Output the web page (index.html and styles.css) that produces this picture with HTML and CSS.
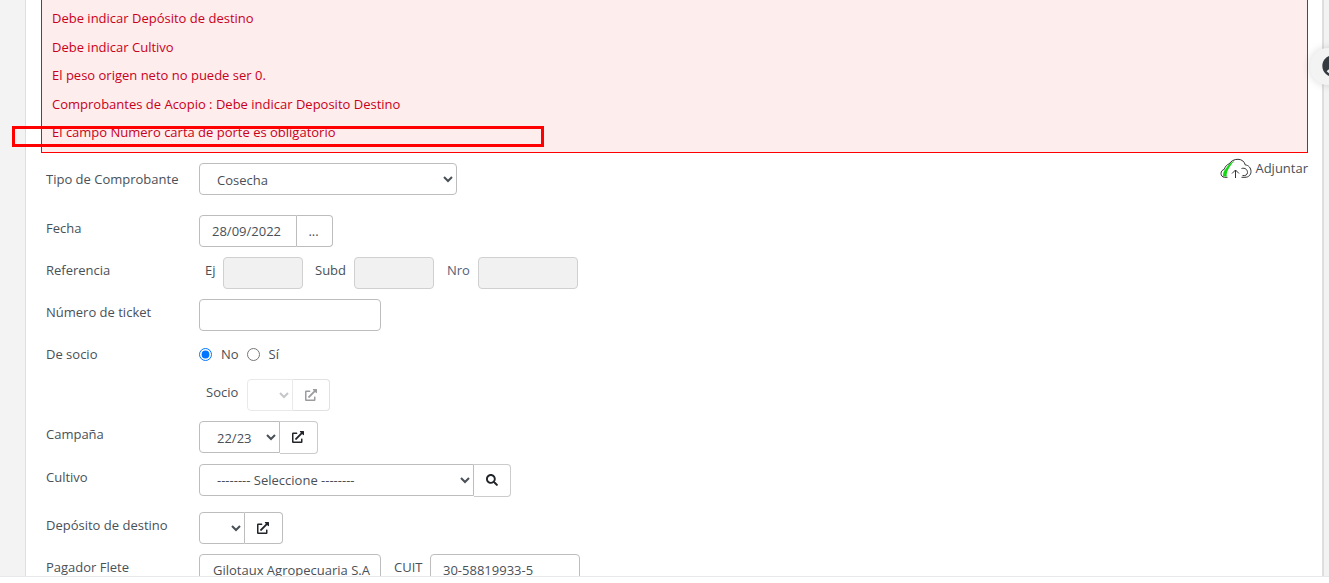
FILE: index.html
```html
<!DOCTYPE html>
<html lang="es">
<head>
<meta charset="utf-8">
<title>Comprobante</title>
<link rel="stylesheet" href="styles.css">
</head>
<body>
<main class="card">
  <div class="alert">
    <p>Debe indicar Depósito de destino</p>
    <p>Debe indicar Cultivo</p>
    <p>El peso origen neto no puede ser 0.</p>
    <p>Comprobantes de Acopio : Debe indicar Deposito Destino</p>
    <p>El campo Numero carta de porte es obligatorio</p>
  </div>
  <form class="form">
    <a class="attach">
      <svg width="32" height="20" viewBox="0 0 32 20" fill="none"><path d="M14.500 2.500C10.500 4.500 7.500 7.500 6 10.500C3.800 12.500 2.500 15.500 3.200 18.500L6.800 18.500C6.200 14.500 8.500 9.500 14.500 2.500Z" fill="#12d812"/><path d="M7.500 19.300H4.500C2.300 19.300 1 17.300 1 15.500C1 13.300 2.600 11.800 4.300 11.300C5.200 8.300 7 6.500 9.300 5.800C11 3 14 1.300 18 1.300C22 1.300 24.500 3.800 25.300 7C28.500 7 31 10 31 13.500C31 17 28.500 19.300 25 19.300H21.500" stroke="#333"/><path d="M15.500 20V12M12 15.500L15.500 12L19 15.500" stroke="#333"/><path d="M21.500 10.500C25 9.500 27.500 11.500 27.500 14.500C27.500 17 25 18 22.500 17.500" stroke="#333"/></svg>
      Adjuntar
    </a>
    <div class="row row-tipo">
      <label class="label">Tipo de Comprobante</label>
      <select class="ctl w258"><option>Cosecha</option></select>
    </div>
    <div class="row">
      <label class="label">Fecha</label>
      <div class="group">
        <input class="ctl pad12 w99 joined-l" value="28/09/2022">
        <button type="button" class="ctl addon dots">...</button>
      </div>
    </div>
    <div class="row">
      <label class="label">Referencia</label>
      <span class="sub s-ej">Ej</span><input class="ctl off w80" disabled>
      <span class="sub s-subd">Subd</span><input class="ctl off w80" disabled>
      <span class="sub s-nro">Nro</span><input class="ctl off w100" disabled>
    </div>
    <div class="row">
      <label class="label">Número de ticket</label>
      <input class="ctl w182">
    </div>
    <div class="row row-radio">
      <label class="label">De socio</label>
      <input class="radio" type="radio" name="socio" checked><span class="opt">No</span>
      <input class="radio" type="radio" name="socio"><span class="opt">Sí</span>
    </div>
    <div class="row row-socio">
      <span class="sub s-socio">Socio</span>
      <div class="group faded">
        <select class="ctl w46 joined-l" disabled></select>
        <button type="button" class="ctl addon w37" disabled><svg class="ext" viewBox="0 0 512 512"><use href="#ext"/></svg></button>
      </div>
    </div>
    <div class="row">
      <label class="label">Campaña</label>
      <div class="group">
        <select class="ctl w81 joined-l"><option>22/23</option></select>
        <button type="button" class="ctl addon tall w38"><svg class="ext" viewBox="0 0 512 512"><use href="#ext"/></svg></button>
      </div>
    </div>
    <div class="row row-cultivo">
      <label class="label">Cultivo</label>
      <div class="group">
        <select class="ctl w275 joined-l"><option>-------- Seleccione --------</option></select>
        <button type="button" class="ctl addon tall w37"><svg class="ext" viewBox="0 0 512 512"><path d="M505 442.700 405.300 343c-4.500-4.500-10.600-7-17-7H372c27.600-35.300 44-79.700 44-128C416 93.100 322.900 0 208 0S0 93.100 0 208s93.100 208 208 208c48.300 0 92.700-16.400 128-44v16.300c0 6.400 2.500 12.500 7 17l99.700 99.700c9.400 9.400 24.600 9.400 33.900 0l28.300-28.300c9.400-9.400 9.400-24.600.1-34zM208 336c-70.700 0-128-57.200-128-128 0-70.700 57.200-128 128-128 70.700 0 128 57.200 128 128 0 70.700-57.200 128-128 128z" fill="#212529"/></svg></button>
      </div>
    </div>
    <div class="row row-deposito">
      <label class="label">Depósito de destino</label>
      <div class="group">
        <select class="ctl w46 joined-l"></select>
        <button type="button" class="ctl addon w38"><svg class="ext" viewBox="0 0 512 512"><use href="#ext"/></svg></button>
      </div>
    </div>
    <div class="row">
      <label class="label">Pagador Flete</label>
      <input class="ctl tight w182" value="Gilotaux Agropecuaria S.A">
      <span class="sub s-cuit">CUIT</span>
      <input class="ctl pad12 w150" value="30-58819933-5">
    </div>
  </form>
</main>
<footer class="strip"></footer>
<div class="user-tab"><svg width="22" height="22" viewBox="0 0 496 512"><path fill="#343a40" d="M248 8C111 8 0 119 0 256s111 248 248 248 248-111 248-248S385 8 248 8zm0 96c48.600 0 88 39.400 88 88s-39.400 88-88 88-88-39.400-88-88 39.400-88 88-88zm0 344c-58.700 0-111.300-26.600-146.500-68.200 18.800-35.400 55.600-59.800 98.500-59.800 2.400 0 4.800.4 7.100 1.100 13 4.200 26.600 6.900 40.900 6.900 14.300 0 28-2.700 40.900-6.900 2.300-.7 4.700-1.100 7.100-1.100 42.900 0 79.700 24.400 98.500 59.800C359.300 421.400 306.700 448 248 448z"/></svg></div>
<div class="mark"></div>
<svg class="defs" width="0" height="0"><defs><g id="ext"><path d="M432 320h-32a16 16 0 0 0-16 16v112H64V128h144a16 16 0 0 0 16-16V80a16 16 0 0 0-16-16H48a48 48 0 0 0-48 48v352a48 48 0 0 0 48 48h352a48 48 0 0 0 48-48V336a16 16 0 0 0-16-16zM488 0H360c-21.400 0-32.100 25.900-17 41l35.700 35.700L135 320.400a24 24 0 0 0 0 34l22.700 22.600a24 24 0 0 0 34 0l243.600-243.700L471 169c15 15 41 4.500 41-17V24a24 24 0 0 0-24-24z"/></g></defs></svg>
</body>
</html>
```
FILE: styles.css
```css
* { box-sizing: border-box; }
html, body { height: 583px; overflow: hidden; }
body { margin: 0; background: #f3f3f3; font-family: "Open Sans", sans-serif; font-size: 13px; color: #495057; position: relative; }
.card { margin-left: 25px; margin-right: 5px; height: 576px; overflow: hidden; background: #fff; border-left: 1px solid #dedede; border-right: 2px solid #dedede; padding: 0 14px 0 15px; }
.strip { height: 7px; background: #fff; border-top: 1px solid #e6e8ea; }
.alert { height: 153px; border: 1px solid #f00; border-top: 0; background: #feeded; color: #c9001a; padding: 4px 10px 0; }
.alert p { margin: 0; height: 28.500px; line-height: 28.500px; white-space: nowrap; }
.form { position: relative; padding-top: 10px; }
.attach { position: absolute; top: 5px; right: 0; display: flex; align-items: center; gap: 3px; color: #495057; }
.row { display: flex; align-items: flex-start; height: 32px; margin: 0 0 10px 5px; }
.row-tipo { margin-bottom: 20px; }
.row-radio { height: 16px; margin: 15px 0 17px 5px; align-items: center; }
.row-cultivo { margin-bottom: 16px; margin-top: 11px; }
.label { width: 153px; flex: none; padding-top: 5px; line-height: 17px; }
.row-tipo .label { padding-top: 8px; }
.row-radio .label { padding-top: 0; }
.ctl { height: 32px; border: 1px solid #bdbdbd; border-radius: 4px; background: #fff; font: inherit; color: #495057; padding: 0 13px; margin: 0; outline: 0; }
.pad12 { padding: 0 8px 0 12px; }
.tight { padding: 0 6px 0 13px; }
select.ctl { padding: 2px 0 0 13px; }
.row-cultivo select.ctl { padding-top: 0; }
.off { background: #f1f1f1; border-color: #d0d0d0; }
.group { display: flex; align-items: flex-start; }
.joined-l { border-radius: 4px 0 0 4px; }
.addon { border-left: 0; border-radius: 0 4px 4px 0; padding: 0 1px 1px 0; display: flex; align-items: center; justify-content: center; }
.tall { height: 33px; border-color: #cbcbcb; }
.dots { width: 36px; padding: 0 2px 0 0; }
.w258 { width: 258px; }
.w99 { width: 98px; }
.w182 { width: 182px; }
.w80 { width: 80px; }
.w100 { width: 100px; }
.w46 { width: 46px; }
.w81 { width: 81px; }
.w275 { width: 275px; }
.w150 { width: 150px; }
.w37 { width: 37px; }
.w38 { width: 38px; }
.ext { width: 12px; height: 12px; fill: #212529; }
.sub { padding-top: 5px; line-height: 17px; }
.s-ej { margin-left: 6px; width: 18px; }
.s-subd { margin-left: 12px; width: 39px; }
.s-nro { margin-left: 13px; width: 31px; color: #52617a; }
.s-socio { margin-left: 160px; width: 41px; }
.s-cuit { margin-left: 13px; width: 36px; }
.faded { opacity: .45; }
.radio { margin: 0 9px 0 0; width: 13px; height: 13px; flex: none; accent-color: #0075ff; }
.opt { line-height: 16px; }
.opt + .radio { margin-left: 8px; margin-right: 9px; }
.user-tab { position: absolute; left: 1310px; top: 48px; width: 40px; height: 37px; background: #f3f3f3; border-radius: 18px 0 0 18px; box-shadow: 0 0 8px rgba(0,0,0,.15); padding: 7px 0 0 12px; }
.mark { position: absolute; left: 12px; top: 126px; width: 532px; height: 21px; border: 3px solid #f00; }
.defs { position: absolute; }
```
